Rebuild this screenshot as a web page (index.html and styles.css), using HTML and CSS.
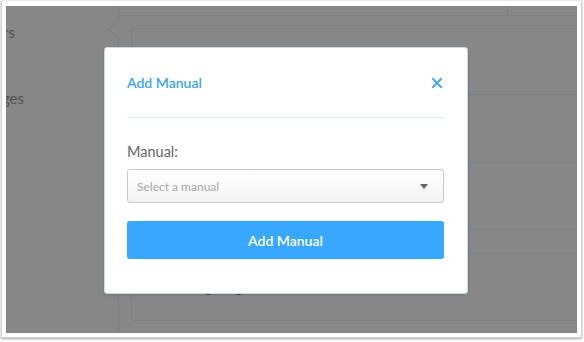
FILE: index.html
```html
<!DOCTYPE html>
<html lang="en">
<head>
  <meta charset="UTF-8">
  <meta name="viewport" content="width=device-width, initial-scale=1.0">
  <title>Add Manual</title>
  <link rel="stylesheet" href="styles.css">
</head>
<body>
  <div class="frame">
    <div class="screen">

      <!-- App behind the dialog -->
      <div class="app">
        <div class="sidebar">
          <div class="nav-item">Users</div>
          <div class="nav-item">Images</div>
        </div>
        <div class="main">
          <div class="notch"></div>
          <div class="topbar">
            <div class="topbar-left"></div>
            <div class="topbar-right"></div>
          </div>
          <div class="panel">
            <div class="row row-head"></div>
            <div class="row"></div>
            <div class="row"></div>
            <div class="row row-sub"></div>
            <div class="row"><span class="row-title">Navigating</span></div>
          </div>
        </div>
      </div>

      <!-- Modal -->
      <div class="overlay"></div>
      <div class="modal">
        <div class="modal-header">
          <h2 class="modal-title">Add Manual</h2>
          <span class="close-btn">
            <svg width="12" height="12" viewBox="0 0 12 12">
              <path d="M2 2 L10 10 M10 2 L2 10" stroke="#47a7f2" stroke-width="2" stroke-linecap="square"/>
            </svg>
          </span>
        </div>
        <div class="modal-body">
          <label class="field-label">Manual:</label>
          <div class="select">
            <span class="select-placeholder">Select a manual</span>
            <span class="select-arrow"></span>
          </div>
          <button class="btn-primary">Add Manual</button>
        </div>
      </div>

    </div>
  </div>
</body>
</html>
```

FILE: styles.css
```css
* {
  margin: 0;
  padding: 0;
  box-sizing: border-box;
}

body {
  font-family: 'Lato', 'Open Sans', sans-serif;
  background: #ffffff;
  width: 584px;
  height: 342px;
  overflow: hidden;
}

.frame {
  margin-left: 1px;
  width: 581px;
  height: 338px;
  border: 1px solid #d2d2d2;
  border-top-color: #e8e8e8;
  padding: 5px 4px 4px 4px;
  background: #ffffff;
  box-shadow: 0 1px 2px rgba(0, 0, 0, 0.35);
}

.screen {
  position: relative;
  width: 571px;
  height: 327px;
  overflow: hidden;
  background: #ffffff;
}

/* Background app */
.app {
  display: flex;
  height: 100%;
}

.sidebar {
  width: 112px;
  flex-shrink: 0;
  padding-top: 16px;
}

.nav-item {
  margin-left: -28px;
  height: 66px;
  font-size: 15px;
  line-height: 20px;
  color: #9a9a9a;
}

.main {
  position: relative;
  flex: 1;
  border-left: 1px solid #e9f0f2;
}

.notch {
  position: absolute;
  left: -8px;
  top: 16px;
  width: 15px;
  height: 15px;
  background: #ffffff;
  border-left: 1px solid #e9f0f2;
  border-bottom: 1px solid #e9f0f2;
  transform: rotate(45deg);
}

.topbar {
  display: flex;
  height: 10px;
  border-bottom: 1px solid #e9f0f2;
}

.topbar-left {
  width: 389px;
  border-right: 1px solid #e9f0f2;
}

.panel {
  margin: 12px 0 0 12px;
  border-left: 1px solid #e9f0f2;
  border-top: 1px solid #e9f0f2;
}

.row {
  height: 67px;
  border-bottom: 1px solid #e9f0f2;
  display: flex;
  align-items: center;
  padding-left: 45px;
}

.row-head {
  height: 66px;
}

.row:nth-child(2) {
  height: 68px;
}

.row-sub {
  height: 24px;
}

.row-title {
  font-size: 14px;
  line-height: 20px;
  color: #8a8a8a;
  margin-top: 1px;
}

.overlay {
  position: absolute;
  top: 0;
  left: 0;
  width: 100%;
  height: 100%;
  background: rgba(0, 0, 0, 0.47);
}

/* Modal */
.modal {
  position: absolute;
  left: 98px;
  top: 41px;
  width: 364px;
  background: #ffffff;
  border: 1px solid #c9d9e6;
  border-radius: 3px;
  padding: 0 23px 34px 22px;
  box-shadow: 0 1px 3px rgba(0, 0, 0, 0.15);
}

.modal-header {
  display: flex;
  justify-content: space-between;
  align-items: center;
  padding: 25px 0 24px;
  border-bottom: 1px solid #d9e9f6;
}

.modal-title {
  font-size: 14px;
  line-height: 20px;
  font-weight: 600;
  color: #3ba4f3;
}

.close-btn {
  display: flex;
  margin-right: 1px;
}

.modal-body {
  display: flex;
  flex-direction: column;
  padding-top: 24px;
}

.field-label {
  font-size: 14.5px;
  line-height: 20px;
  color: #666666;
}

.select {
  margin-top: 7px;
  height: 34px;
  display: flex;
  align-items: center;
  justify-content: space-between;
  padding: 0 15px 0 9px;
  border: 1px solid #c8c8c8;
  border-radius: 3px;
  background: linear-gradient(#ffffff, #f3f3f3);
}

.select-placeholder {
  font-size: 12px;
  color: #a9a9a9;
}

.select-arrow {
  width: 0;
  height: 0;
  border-left: 4px solid transparent;
  border-right: 4px solid transparent;
  border-top: 5px solid #666666;
}

.btn-primary {
  margin-top: 18px;
  height: 38px;
  border: none;
  border-radius: 3px;
  background: #38a8fe;
  color: #ffffff;
  font-family: 'Lato', 'Open Sans', sans-serif;
  font-size: 14px;
  font-weight: 600;
}
```
